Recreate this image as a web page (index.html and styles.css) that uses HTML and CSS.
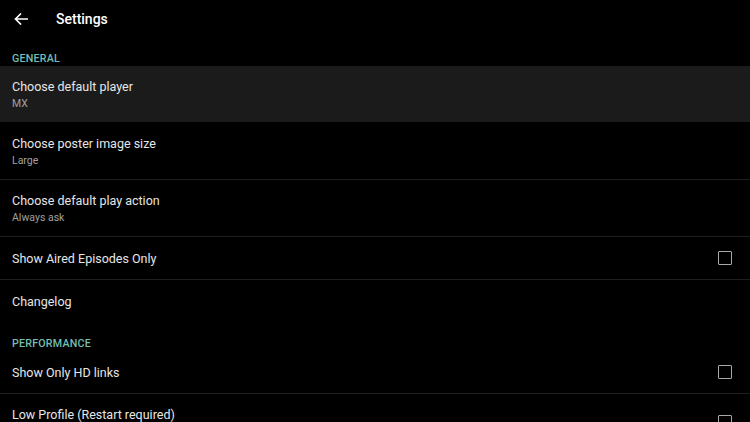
FILE: index.html
```html
<!DOCTYPE html>
<html lang="en">
<head>
  <meta charset="UTF-8" />
  <meta name="viewport" content="width=device-width, initial-scale=1.0" />
  <title>Settings</title>
  <link rel="stylesheet" href="styles.css">
</head>
<body>
  <header class="toolbar">
    <button class="back" aria-label="Back">
      <svg width="14" height="12" viewBox="0 0 14 12">
        <path d="M13.5 6H1.5M6.5 1L1.5 6l5 5" fill="none" stroke="#fff" stroke-width="1.6" stroke-linecap="square"/>
      </svg>
    </button>
    <h1>Settings</h1>
  </header>

  <main class="prefs">
    <div class="category">GENERAL</div>
    <div class="pref two selected">
      <div class="pref-text">
        <div class="title">Choose default player</div>
        <div class="summary">MX</div>
      </div>
    </div>
    <div class="pref two">
      <div class="pref-text">
        <div class="title">Choose poster image size</div>
        <div class="summary">Large</div>
      </div>
    </div>
    <div class="pref two">
      <div class="pref-text">
        <div class="title">Choose default play action</div>
        <div class="summary">Always ask</div>
      </div>
    </div>
    <div class="pref one">
      <div class="pref-text">
        <div class="title">Show Aired Episodes Only</div>
      </div>
      <span class="check"></span>
    </div>
    <div class="pref one last">
      <div class="pref-text">
        <div class="title">Changelog</div>
      </div>
    </div>

    <div class="category">PERFORMANCE</div>
    <div class="pref one">
      <div class="pref-text">
        <div class="title">Show Only HD links</div>
      </div>
      <span class="check"></span>
    </div>
    <div class="pref two tall">
      <div class="pref-text">
        <div class="title">Low Profile (Restart required)</div>
      </div>
      <span class="check"></span>
    </div>
  </main>
</body>
</html>
```

FILE: styles.css
```css
* {
  margin: 0;
  padding: 0;
  box-sizing: border-box;
  font-family: Roboto, 'Liberation Sans', sans-serif;
}

body {
  background: #000;
  color: #e6e6e6;
  width: 750px;
  height: 422px;
  overflow: hidden;
}

.toolbar {
  height: 38px;
  display: flex;
  align-items: center;
}

.toolbar .back {
  width: 42px;
  height: 38px;
  background: none;
  border: none;
  display: flex;
  align-items: center;
  justify-content: center;
}

.toolbar h1 {
  margin-left: 14px;
  font-size: 14px;
  font-weight: 500;
  color: #fff;
}

.category {
  height: 28px;
  padding: 14px 0 0 12px;
  font-size: 10.7px;
  font-weight: 500;
  color: #74bdb3;
  letter-spacing: 0.2px;
}

.pref {
  display: flex;
  align-items: center;
  padding: 0 18px 0 12px;
  border-bottom: 1px solid #1e1e1e;
}

.pref.two {
  height: 57px;
}

.pref.one {
  height: 43px;
}

.pref.last {
  border-bottom: none;
}

.pref.selected {
  background: #1b1b1b;
  border-bottom-color: #000;
}

.pref-text {
  flex: 1;
}

.pref.tall .pref-text {
  align-self: flex-start;
  padding-top: 13px;
}

.title {
  font-size: 12.5px;
  color: #e6e6e6;
}

.summary {
  font-size: 10.5px;
  color: #a0a0a0;
  margin-top: 3px;
}

.check {
  width: 14px;
  height: 14px;
  border: 1.5px solid #a8a8a8;
  border-radius: 1px;
}
```
